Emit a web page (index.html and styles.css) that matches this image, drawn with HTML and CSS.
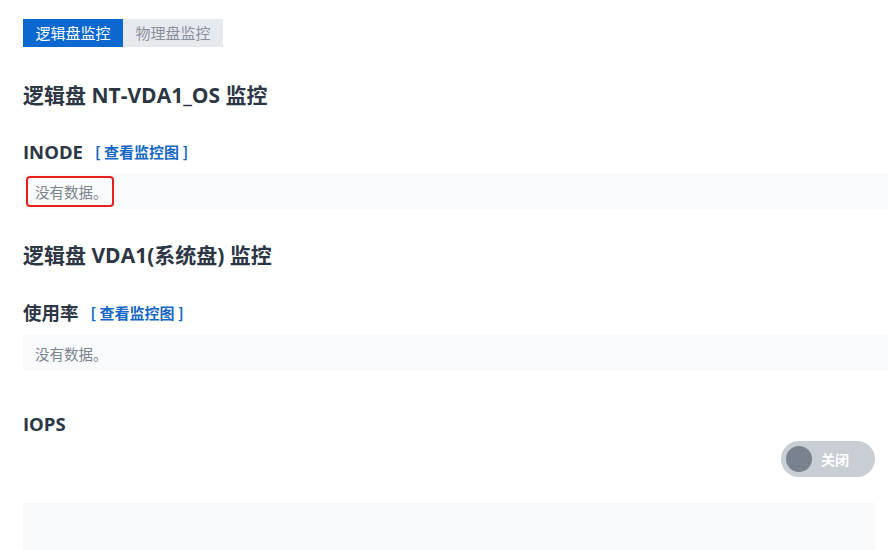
FILE: index.html
```html
<!DOCTYPE html>
<html lang="zh">
<head>
<meta charset="utf-8">
<link rel="stylesheet" href="styles.css">
</head>
<body>
<div class="page">
  <div class="tabs">
    <div class="tab active">逻辑盘监控</div>
    <div class="tab">物理盘监控</div>
  </div>

  <h2 class="title t1">逻辑盘 NT-VDA1_OS 监控</h2>
  <div class="sub s1"><span class="sub-name">INODE</span><a class="link">[ 查看监控图 ]</a></div>
  <div class="nodata n1 wide"><span class="msg marked">没有数据。</span></div>

  <h2 class="title t2">逻辑盘 VDA1(系统盘) 监控</h2>
  <div class="sub s2"><span class="sub-name">使用率</span><a class="link">[ 查看监控图 ]</a></div>
  <div class="nodata n2 wide"><span class="msg">没有数据。</span></div>

  <div class="sub s3"><span class="sub-name">IOPS</span></div>
  <div class="toggle-row">
    <div class="toggle"><span class="knob"></span><span class="toggle-text">关闭</span></div>
  </div>
  <div class="chart"></div>
</div>
</body>
</html>
```
FILE: styles.css
```css
html, body {
  margin: 0;
  padding: 0;
  background: #ffffff;
  overflow: hidden;
}
body {
  font-family: "Open Sans", "Noto Sans CJK SC", sans-serif;
  color: #2f3a48;
}
.page {
  padding: 19px 0 0 23px;
  width: 900px;
}
.tabs {
  display: flex;
}
.tab {
  width: 100px;
  height: 28px;
  line-height: 28px;
  text-align: center;
  font-size: 15px;
  font-family: "Noto Sans CJK SC", sans-serif;
  background: #e6eaef;
  color: #8a9099;
}
.tab.active {
  background: #0a68d0;
  color: #ffffff;
}
.title {
  margin: 0;
  font-size: 21px;
  line-height: 28px;
  font-weight: 700;
  color: #2c3644;
  font-family: "Open Sans", "Noto Sans CJK SC", sans-serif;
}
.t1 { margin-top: 34px; }
.t2 { margin-top: 32px; }
.sub {
  display: flex;
  align-items: center;
  height: 24px;
}
.s1 { margin-top: 30px; }
.s2 { margin-top: 31px; }
.s3 { margin-top: 40px; }
.sub-name {
  font-size: 18.5px;
  font-weight: 700;
  color: #2c3644;
}
.link {
  margin-left: 12px;
  font-size: 15px;
  font-weight: 700;
  color: #1467c4;
  font-family: "Noto Sans CJK SC", sans-serif;
}
.nodata {
  height: 36px;
  background: #f8fafc;
  display: flex;
  align-items: center;
  padding-left: 3px;
  box-sizing: border-box;
}
.n1 { margin-top: 10px; }
.n2 { margin-top: 11px; }
.wide { width: 880px; }
.msg {
  font-family: "Noto Sans CJK SC", sans-serif;
  font-size: 14.5px;
  color: #7d848c;
  padding: 5px 4px 5px 7px;
  border: 2px solid transparent;
  border-radius: 4px;
  line-height: 17px;
}
.msg.marked {
  border-color: #e8201a;
}
.toggle-row {
  display: flex;
  justify-content: flex-end;
  width: 852px;
  margin-top: 6px;
}
.toggle {
  width: 94px;
  height: 36px;
  border-radius: 18px;
  background: #c8ced4;
  display: flex;
  align-items: center;
  box-sizing: border-box;
  padding-left: 5px;
}
.knob {
  width: 26px;
  height: 26px;
  border-radius: 50%;
  background: #78838f;
}
.toggle-text {
  margin-left: 9px;
  color: #ffffff;
  font-weight: 700;
  font-size: 14px;
  font-family: "Noto Sans CJK SC", sans-serif;
}
.chart {
  margin-top: 26px;
  width: 852px;
  height: 60px;
  background: #f8f9fb;
}
```
